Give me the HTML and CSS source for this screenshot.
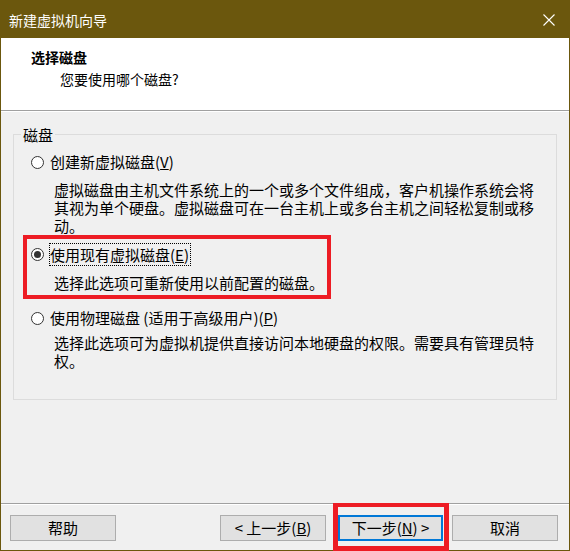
FILE: index.html
```html
<!DOCTYPE html>
<html lang="zh-CN">
<head>
    <meta charset="UTF-8">
    <meta name="viewport" content="width=device-width, initial-scale=1.0">
    <title>新建虚拟机向导</title>
    <link rel="stylesheet" href="styles.css">
</head>
<body>

    <div class="window">
        <div class="titlebar">
            <span class="title">新建虚拟机向导</span>
            <svg class="close" width="12" height="12" viewBox="0 0 12 12">
                <path d="M0.5 0.5 L11.5 11.5 M11.5 0.5 L0.5 11.5" stroke="#fff" stroke-width="1.1" fill="none"/>
            </svg>
        </div>

        <div class="header">
            <div class="header-title">选择磁盘</div>
            <div class="header-sub">您要使用哪个磁盘?</div>
        </div>

        <div class="content">
            <div class="groupbox">
                <span class="group-label">磁盘</span>

                <div class="option opt-first">
                    <div class="option-row">
                        <span class="radio"></span>
                        <span class="option-label">创建新虚拟磁盘(<u>V</u>)</span>
                    </div>
                    <p class="option-desc">虚拟磁盘由主机文件系统上的一个或多个文件组成，客户机操作系统会将<br>其视为单个硬盘。虚拟磁盘可在一台主机上或多台主机之间轻松复制或移<br>动。</p>
                </div>

                <div class="option marked">
                    <div class="option-row">
                        <span class="radio checked"></span>
                        <span class="option-label focused">使用现有虚拟磁盘(<u>E</u>)</span>
                    </div>
                    <p class="option-desc">选择此选项可重新使用以前配置的磁盘。</p>
                </div>

                <div class="option opt-last">
                    <div class="option-row">
                        <span class="radio"></span>
                        <span class="option-label">使用物理磁盘 (适用于高级用户)(<u>P</u>)</span>
                    </div>
                    <p class="option-desc">选择此选项可为虚拟机提供直接访问本地硬盘的权限。需要具有管理员特<br>权。</p>
                </div>
            </div>
        </div>

        <div class="footer">
            <button class="btn">帮助</button>
            <button class="btn btn-back">&lt; 上一步(<u>B</u>)</button>
            <button class="btn btn-default">下一步(<u>N</u>) &gt;</button>
            <button class="btn btn-cancel">取消</button>
        </div>

        <div class="next-mark"></div>
    </div>

</body>
</html>
```

FILE: styles.css
```css
body {
    margin: 0;
    font-family: "Noto Sans CJK SC", "Noto Sans", sans-serif;
    color: #000;
}

.window {
    position: relative;
    width: 570px;
    height: 551px;
    box-sizing: border-box;
    border: 1px solid #6b570d;
    display: flex;
    flex-direction: column;
    background-color: #f0f0f0;
}

/* Title bar */
.titlebar {
    height: 37px;
    flex-shrink: 0;
    background-color: #6b570d;
    display: flex;
    align-items: center;
    justify-content: space-between;
    padding: 0 14px 0 8px;
}

.title {
    color: #fff;
    font-size: 14px;
    line-height: 18px;
}

/* Header */
.header {
    height: 72px;
    flex-shrink: 0;
    background-color: #fff;
    border-bottom: 1px solid #a0a0a0;
}

.header-title {
    font-size: 14px;
    font-weight: bold;
    line-height: 18px;
    padding: 10px 0 0 30px;
}

.header-sub {
    font-size: 14px;
    line-height: 18px;
    margin-top: 4px;
    padding-left: 59px;
}

/* Content */
.content {
    flex: 1;
    border-top: 1px solid #fff;
    padding: 22px 12px 0 12px;
}

.groupbox {
    position: relative;
    height: 266px;
    box-sizing: border-box;
    border: 1px solid #dcdcdc;
    padding-left: 9px;
}

.group-label {
    position: absolute;
    left: 7px;
    top: -9px;
    padding: 0 2px;
    font-size: 15px;
    line-height: 18px;
    background-color: #f0f0f0;
}

.option {
    padding-left: 8px;
}

.opt-first {
    margin-top: 18px;
}

.opt-first .option-desc {
    margin-top: 10px;
}

.option.marked {
    width: 308px;
    box-sizing: border-box;
    border: 4px solid #ed1c24;
    padding: 4px 0 3px 4px;
}

.marked .option-desc {
    margin-top: 8px;
}

.opt-last {
    margin-top: 10px;
}

.opt-last .option-desc {
    margin-top: 7px;
}

.option-row {
    display: flex;
    align-items: center;
    gap: 6px;
    font-size: 15px;
    line-height: 18px;
}

.radio {
    position: relative;
    width: 13px;
    height: 13px;
    box-sizing: border-box;
    border: 1px solid #333;
    border-radius: 50%;
    background-color: #fff;
    flex-shrink: 0;
}

.radio.checked::after {
    content: "";
    position: absolute;
    left: 2px;
    top: 2px;
    width: 7px;
    height: 7px;
    border-radius: 50%;
    background-color: #333;
}

.option-label.focused {
    margin-left: -1px;
    padding: 2px 1px 1px 0;
    border: 1px dotted #000;
}

.option-desc {
    margin: 0;
    padding-left: 23px;
    font-size: 15px;
    line-height: 18px;
}

/* Footer buttons */
.footer {
    height: 47px;
    flex-shrink: 0;
    box-sizing: border-box;
    border-top: 1px solid #a0a0a0;
    box-shadow: inset 0 1px 0 #fff;
    padding: 11px 0 0 9px;
    display: flex;
    align-items: flex-start;
}

.btn {
    width: 106px;
    height: 26px;
    box-sizing: border-box;
    border: 1px solid #adadad;
    background-color: #e1e1e1;
    font-family: "Noto Sans CJK SC", "Noto Sans", sans-serif;
    font-size: 15px;
    line-height: 18px;
    color: #000;
    padding: 0;
}

.btn-back {
    margin-left: 104px;
}

.btn-default {
    width: 105px;
    margin-left: 12px;
    border: 2px solid #0078d7;
}

.btn-cancel {
    margin-left: 9px;
}

.next-mark {
    position: absolute;
    left: 332px;
    top: 502px;
    width: 116px;
    bottom: -1px;
    box-sizing: border-box;
    border: 5px solid #ed1c24;
    border-top-width: 4px;
}
```
